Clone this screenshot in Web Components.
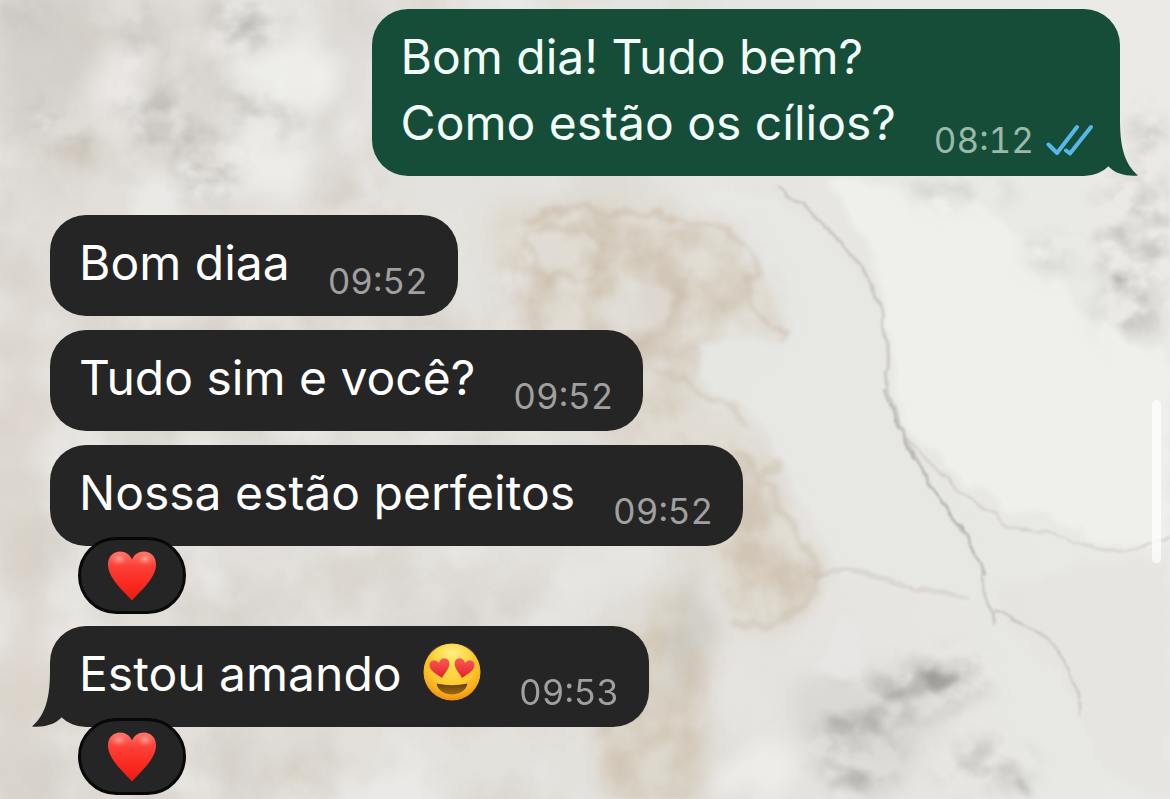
<!DOCTYPE html>
<html lang="pt-BR">
<head>
<meta charset="utf-8">
<meta name="viewport" content="width=device-width, initial-scale=1">
<title>Conversa</title>
<style>
  html, body { margin: 0; min-height: 100%; }
  body { font-family: Inter, "Liberation Sans", sans-serif; background: #e6e4df; overflow: hidden; }
</style>
</head>
<body>
<chat-screen>
  <chat-bubble side="out" tail time="08:12" read>Bom dia! Tudo bem?<br>Como estão os cílios?</chat-bubble>
  <chat-bubble side="in" first time="09:52">Bom diaa</chat-bubble>
  <chat-bubble side="in" time="09:52">Tudo sim e você?</chat-bubble>
  <chat-bubble side="in" time="09:52">Nossa estão perfeitos<chat-reaction slot="reaction"></chat-reaction></chat-bubble>
  <chat-bubble side="in" tail time="09:53">Estou amando <emoji-love></emoji-love><chat-reaction slot="reaction"></chat-reaction></chat-bubble>
</chat-screen>

<script>
const define = (name, html, setup) => {
  const template = document.createElement('template');
  template.innerHTML = html;
  customElements.define(name, class extends HTMLElement {
    constructor() {
      super();
      this.attachShadow({ mode: 'open' }).append(template.content.cloneNode(true));
    }
    connectedCallback() { if (setup) setup(this, this.shadowRoot); }
  });
};

define('chat-wallpaper', `
<style>
  :host { display: block; overflow: hidden; }
  svg { display: block; width: 100%; height: 100%; }
  filter { color-interpolation-filters: sRGB; }
</style>
<svg viewBox="0 0 1170 799" preserveAspectRatio="xMidYMid slice" aria-hidden="true">
  <defs>
    <linearGradient id="base" x1="0" y1="0.2" x2="1" y2="0">
      <stop offset="0" stop-color="#e1ded9"/><stop offset="0.5" stop-color="#e5e3df"/>
      <stop offset="0.75" stop-color="#e8e8e5"/><stop offset="1" stop-color="#ebeae7"/>
    </linearGradient>
    <linearGradient id="fade"><stop offset="0" stop-color="#fff"/><stop offset=".4" stop-color="#fff"/><stop offset=".7" stop-color="#000"/></linearGradient>
    <mask id="leftSide"><rect width="1170" height="799" fill="url(#fade)"/></mask>
    <filter id="cloud" x="-30%" y="-30%" width="160%" height="160%">
      <feTurbulence type="fractalNoise" baseFrequency="0.018" numOctaves="5" seed="8"/>
      <feDisplacementMap in="SourceGraphic" scale="80" xChannelSelector="R" yChannelSelector="G"/>
      <feGaussianBlur stdDeviation="10"/>
    </filter>
    <filter id="edge" x="-30%" y="-30%" width="160%" height="160%">
      <feTurbulence type="fractalNoise" baseFrequency="0.03" numOctaves="5" seed="4"/>
      <feDisplacementMap in="SourceGraphic" scale="28" xChannelSelector="R" yChannelSelector="G"/>
      <feGaussianBlur stdDeviation="3"/>
    </filter>
    <filter id="vein" x="-10%" y="-10%" width="120%" height="120%">
      <feTurbulence type="fractalNoise" baseFrequency="0.05" numOctaves="4" seed="2"/>
      <feDisplacementMap in="SourceGraphic" scale="9" xChannelSelector="R" yChannelSelector="G"/>
      <feGaussianBlur stdDeviation="1"/>
    </filter>
    <filter id="tanVein" x="-10%" y="-10%" width="120%" height="120%">
      <feTurbulence type="fractalNoise" baseFrequency="0.04" numOctaves="5" seed="9"/>
      <feDisplacementMap in="SourceGraphic" scale="28" xChannelSelector="R" yChannelSelector="G"/>
      <feGaussianBlur stdDeviation="2.2"/>
    </filter>
    <filter id="soft" x="-40%" y="-40%" width="180%" height="180%"><feGaussianBlur stdDeviation="12"/></filter>
    <filter id="speckle" x="0" y="0" width="100%" height="100%">
      <feTurbulence type="fractalNoise" baseFrequency="0.03 0.035" numOctaves="5" seed="21"/>
      <feColorMatrix values="0 0 0 0 .60  0 0 0 0 .59  0 0 0 0 .57  3 0 0 0 -1.15"/>
      <feGaussianBlur stdDeviation="1.2"/>
    </filter>
    <filter id="tanNoise" x="0" y="0" width="100%" height="100%">
      <feTurbulence type="fractalNoise" baseFrequency="0.022" numOctaves="5" seed="13"/>
      <feColorMatrix values="0 0 0 0 .78  0 0 0 0 .72  0 0 0 0 .64  2.6 0 0 0 -.85"/>
      <feGaussianBlur stdDeviation="1.2"/>
    </filter>
    <filter id="mist" x="0" y="0" width="100%" height="100%">
      <feTurbulence type="fractalNoise" baseFrequency="0.009 0.007" numOctaves="5" seed="5"/>
      <feColorMatrix values="0 0 0 0 .76  0 0 0 0 .73  0 0 0 0 .69  2.2 0 0 0 -.9"/>
    </filter>
    <filter id="milk" x="0" y="0" width="100%" height="100%">
      <feTurbulence type="fractalNoise" baseFrequency="0.009" numOctaves="5" seed="33"/>
      <feColorMatrix values="0 0 0 0 .95  0 0 0 0 .945  0 0 0 0 .94  4 0 0 0 -1.9"/>
    </filter>
    <mask id="greyArea"><g fill="#fff" filter="url(#soft)">
      <ellipse cx="155" cy="120" rx="36" ry="30"/><ellipse cx="208" cy="168" rx="36" ry="38"/>
      <ellipse cx="265" cy="115" rx="50" ry="16" transform="rotate(25 265 115)"/>
      <ellipse cx="245" cy="25" rx="36" ry="26"/><ellipse cx="138" cy="35" rx="12" ry="35"/>
      <ellipse cx="60" cy="130" rx="46" ry="16" transform="rotate(25 60 130)"/><ellipse cx="20" cy="15" rx="20" ry="14"/>
      <ellipse cx="1135" cy="235" rx="40" ry="65"/><ellipse cx="1050" cy="255" rx="20" ry="16"/>
      <ellipse cx="1130" cy="310" rx="34" ry="30"/><ellipse cx="960" cy="190" rx="55" ry="10"/>
      <ellipse cx="1150" cy="140" rx="20" ry="30"/>
      <ellipse cx="920" cy="690" rx="72" ry="30" transform="rotate(-15 920 690)"/>
      <ellipse cx="860" cy="745" rx="44" ry="56"/><ellipse cx="985" cy="765" rx="48" ry="24"/>
    </g></mask>
    <mask id="tanArea"><g fill="#fff" filter="url(#soft)">
      <path d="M510 210 L640 210 745 235 785 325 715 325 665 400 735 430 790 510 825 590 770 630 720 600 710 540 620 440 500 300Z"/>
      <path d="M600 640 L690 590 710 680 690 799 610 799 590 720Z"/>
      <ellipse cx="350" cy="205" rx="50" ry="12"/><ellipse cx="75" cy="150" rx="24" ry="16"/>
      <ellipse cx="350" cy="580" rx="100" ry="14" opacity=".5"/><ellipse cx="300" cy="775" rx="70" ry="20" opacity=".5"/>
    </g></mask>
  </defs>
  <rect width="1170" height="799" fill="url(#base)"/>
  <g mask="url(#leftSide)">
    <rect width="1170" height="799" filter="url(#mist)" opacity="0.45"/>
    <rect width="1170" height="799" filter="url(#milk)" opacity="0.55"/>
  </g>
  <g filter="url(#cloud)">
    <ellipse cx="295" cy="75" rx="60" ry="36" fill="#f0efec" opacity=".9"/>
    <ellipse cx="275" cy="165" rx="50" ry="30" fill="#f0efec" opacity=".8"/>
    <ellipse cx="115" cy="80" rx="30" ry="30" fill="#edebe8" opacity=".8"/>
    <path d="M0 0H110L60 90 0 120Z" fill="#cfcdca" opacity=".5"/>
    <path d="M330 0H370V110L325 150Z" fill="#d1ceca" opacity=".5"/>
    <path d="M0 240L50 320 40 520 70 700 0 799Z" fill="#d8d1c7" opacity=".6"/>
    <path d="M490 210L640 200 755 235 785 330 720 335 680 400 750 430 825 590 770 630 690 570 620 430 510 320Z" fill="#dfd9cf" opacity=".75"/>
    <path d="M610 620L700 580 710 700 680 799 600 799Z" fill="#dbd4c8" opacity=".8"/>
    <path d="M690 560L700 570 690 700 672 680Z" fill="#c5c4bf" opacity=".7"/>
    <path d="M740 730Q780 710 800 799H700Z" fill="#f0edea" opacity=".9"/>
    <ellipse cx="870" cy="720" rx="60" ry="60" fill="#d6d4d0" opacity=".7"/>
  </g>
  <g filter="url(#edge)">
    <path d="M770 195Q860 240 885 340 890 430 950 500 990 560 995 615Q900 575 835 580 800 500 765 425 710 370 725 338 770 350 790 340 762 250 700 190Z" fill="#e7e7e4"/>
    <path d="M825 185Q980 185 1055 260 1085 340 1170 350V540Q1090 555 1050 515 960 500 900 420 890 250 825 185Z" fill="#efefec"/>
    <path d="M840 615Q870 640 860 685L820 670Z" fill="#e8e6e4"/>
    <path d="M1000 625Q1075 670 1090 760L1170 799V560Q1090 560 995 590Z" fill="#e4e3df" opacity=".6"/>
  </g>
  <g mask="url(#tanArea)"><rect width="1170" height="799" filter="url(#tanNoise)" opacity=".6"/></g>
  <g filter="url(#edge)"><ellipse cx="635" cy="305" rx="36" ry="24" fill="#e5e3df" opacity=".6"/><path d="M700 345Q730 325 775 350L740 400 700 380Z" fill="#e6e6e3"/></g>
  <g mask="url(#greyArea)"><rect width="1170" height="799" filter="url(#speckle)" opacity=".4"/></g>
  <g filter="url(#edge)" fill="#85837f">
    <ellipse cx="160" cy="128" rx="10" ry="16" opacity=".2"/><ellipse cx="240" cy="34" rx="20" ry="7" transform="rotate(-35 240 34)" opacity=".25"/>
    <ellipse cx="922" cy="684" rx="38" ry="10" transform="rotate(-16 922 684)" opacity=".4"/>
    <ellipse cx="938" cy="679" rx="15" ry="10" opacity=".4"/><ellipse cx="860" cy="720" rx="30" ry="8" transform="rotate(-15 860 720)" opacity=".2"/>
    <path d="M980 772Q1010 765 1032 792" fill="none" stroke="#85837f" stroke-width="4" opacity=".5"/>
    <ellipse cx="850" cy="782" rx="22" ry="8" opacity=".25"/>
    <ellipse cx="1118" cy="284" rx="10" ry="5" transform="rotate(45 1118 284)" opacity=".6"/>
    <ellipse cx="1134" cy="214" rx="9" ry="4" transform="rotate(20 1134 214)" opacity=".4"/>
  </g>
  <g filter="url(#vein)" fill="none" stroke-linecap="round">
    <path d="M780 188Q835 230 862 268T886 370Q890 420 935 490T980 565 994 622" stroke="#ccc9c5" stroke-width="3"/>
    <path d="M886 390Q894 430 935 490T985 575" stroke="#b5b2ad" stroke-width="2"/>
    <path d="M905 435Q950 490 1005 523 1030 532 1050 530 1085 550 1125 551 1150 546 1170 536" stroke="#d6d0cb" stroke-width="2"/>
    <path d="M994 610Q1040 630 1055 648T1080 704V715" stroke="#c8c6c2" stroke-width="2"/>
    <path d="M815 578Q840 565 880 578T965 596" stroke="#c6beb5" stroke-width="5" opacity=".35"/>
  </g>
  <g filter="url(#tanVein)" fill="none" stroke-linecap="round">
    <path d="M530 220Q580 200 640 212T720 228Q775 252 745 290 765 330 785 336" stroke="#c9b8a5" stroke-width="6" opacity=".5"/>
    <ellipse cx="565" cy="252" rx="38" ry="28" stroke="#c9b9a6" stroke-width="6" opacity=".4"/>
    <path d="M655 370Q720 395 745 425M740 455Q790 500 820 590 780 640 735 620M765 470Q785 450 768 480M690 270Q680 320 630 350" stroke="#c6b8a4" stroke-width="7" opacity=".4"/>
  </g>
</svg>`);

define('chat-screen', `
<style>
  :host { display: block; position: relative; min-height: 100vh; overflow: hidden; }
  chat-wallpaper { position: absolute; inset: 0; }
  main { position: relative; display: flex; flex-direction: column; gap: 14px; padding: 9px 50px 4px; }
  .thumb { position: absolute; right: 9px; top: 50%; width: 9px; height: 163px; border-radius: 5px; background: rgba(255,255,255,.72); }
</style>
<chat-wallpaper></chat-wallpaper>
<main><slot></slot></main>
<div class="thumb" aria-hidden="true"></div>`);

define('chat-bubble', `
<style>
  :host { --fill: #252525; --meta: #a0a0a0; --text: #fff; --end: 30px; display: flex; flex-direction: column; align-items: flex-start; }
  :host([side="out"]) { --fill: #154d38; --meta: #9ab9a9; --text: #f2fff8; --end: 27px; align-items: flex-end; }
  :host([first]) { margin-top: 25px; }
  .body { position: relative; display: flex; align-items: flex-end; gap: 38px; box-sizing: border-box; max-width: 100%;
    padding: 15px var(--end) 20px 29px; border-radius: 36px; background: var(--fill); color: var(--text); }
  .message { margin: 0; font-size: 48px; line-height: 66px; }
  .meta { display: flex; align-items: center; gap: 12px; color: var(--meta); font-size: 35px; line-height: 30px; font-variant-numeric: tabular-nums; }
  .ticks { display: none; width: 47px; height: 32px; }
  :host([read]) .ticks { display: block; }
  .tail { display: none; position: absolute; right: -18px; bottom: 0; width: 40px; height: 60px; fill: var(--fill); }
  :host([tail]) .tail { display: block; }
  :host([side="in"]) .tail { right: auto; left: -18px; transform: scaleX(-1); }
</style>
<div class="body">
  <svg class="tail" viewBox="0 0 40 60" aria-hidden="true"><path d="M22 4C22 32 27 48 40 59.5 29 60.500 18 58 11 51L4 40V4Z"/></svg>
  <p class="message"><slot></slot></p>
  <div class="meta"><time></time>
    <svg class="ticks" viewBox="0 0 47 32" role="img" aria-label="Lida" fill="none" stroke="#55b9e8" stroke-width="4" stroke-linecap="round" stroke-linejoin="round"><path d="M2.500 20.500L11 29 31 3M20 26.500L24 29.500 45 3"/></svg>
  </div>
</div>
<slot name="reaction"></slot>`, (host, root) => {
  root.querySelector('time').textContent = host.getAttribute('time');
});

define('chat-reaction', `
<style>
  :host { display: block; position: relative; margin: -9px 0 -2px 28px; }
  button { display: flex; align-items: center; justify-content: center; box-sizing: border-box; width: 108px; height: 77px;
    margin: 0; padding: 0; border: 3px solid #080808; border-radius: 39px; background: #252525; }
  svg { display: block; width: 50px; height: 52px; }
</style>
<button type="button" aria-label="Reação: coração">
  <svg viewBox="0 0 50 52" aria-hidden="true">
    <defs>
      <linearGradient id="red" x1="0" y1="0" x2="0" y2="1"><stop offset="0" stop-color="#ff7468"/><stop offset=".3" stop-color="#fc4038"/><stop offset=".65" stop-color="#fb2a20"/><stop offset="1" stop-color="#e81c15"/></linearGradient>
      <radialGradient id="shine"><stop offset="0" stop-color="#ffb3a8" stop-opacity=".8"/><stop offset="1" stop-color="#ff6a60" stop-opacity="0"/></radialGradient>
    </defs>
    <path d="M25 50.500C19 43 1 29 1 14.500 1 6.500 6.500 1.500 13 1.500 18.500 1.500 23 4.500 25 9.500 27 4.500 31.500 1.500 37 1.500 43.500 1.500 49 6.500 49 14.500 49 29 31 43 25 50.500Z" fill="url(#red)"/>
    <ellipse cx="12" cy="9" rx="9" ry="7" fill="url(#shine)"/><ellipse cx="38" cy="9" rx="9" ry="7" fill="url(#shine)"/>
  </svg>
</button>`);

define('emoji-love', `
<style>
  :host { display: inline-block; width: 58px; height: 58px; margin-left: 8px; vertical-align: -10px; }
  svg { display: block; width: 100%; height: 100%; }
</style>
<svg viewBox="0 0 58 58" role="img" aria-label="Rosto sorridente com olhos de coração">
  <defs>
    <radialGradient id="face" cx=".5" cy=".35" r=".66"><stop offset="0" stop-color="#ffe34f"/><stop offset=".5" stop-color="#fed036"/><stop offset=".8" stop-color="#fbb01f"/><stop offset="1" stop-color="#ee8a12"/></radialGradient>
    <radialGradient id="glow" cx=".5" cy=".3" r=".5"><stop offset="0" stop-color="#fff6a0" stop-opacity=".8"/><stop offset="1" stop-color="#ffe96b" stop-opacity="0"/></radialGradient>
    <linearGradient id="mouth" x1="0" y1="0" x2="0" y2="1"><stop offset="0" stop-color="#65400b"/><stop offset="1" stop-color="#a26a12"/></linearGradient>
    <linearGradient id="eye" x1="0" y1="0" x2="0" y2="1"><stop offset="0" stop-color="#fb5a58"/><stop offset="1" stop-color="#e3202b"/></linearGradient>
  </defs>
  <circle cx="29" cy="29" r="28.500" fill="url(#face)"/>
  <ellipse cx="29" cy="15" rx="24" ry="14" fill="url(#glow)"/>
  <path d="M19 35C15 32 6 28 6.500 21.500 7 16.500 13 15.500 16 20 17 14.500 24 13.500 26 18.500 28 24.500 21 30.500 19 35Z" fill="url(#eye)"/>
  <path d="M39 35C43 32 52 28 51.500 21.500 51 16.500 45 15.500 42 20 41 14.500 34 13.500 32 18.500 30 24.500 37 30.500 39 35Z" fill="url(#eye)"/>
  <path d="M13.500 40.500Q29 44 44.500 40.500C43 48 36 51.500 29 51.500S15 48 13.500 40.500Z" fill="url(#mouth)"/>
</svg>`);
</script>
</body>
</html>
